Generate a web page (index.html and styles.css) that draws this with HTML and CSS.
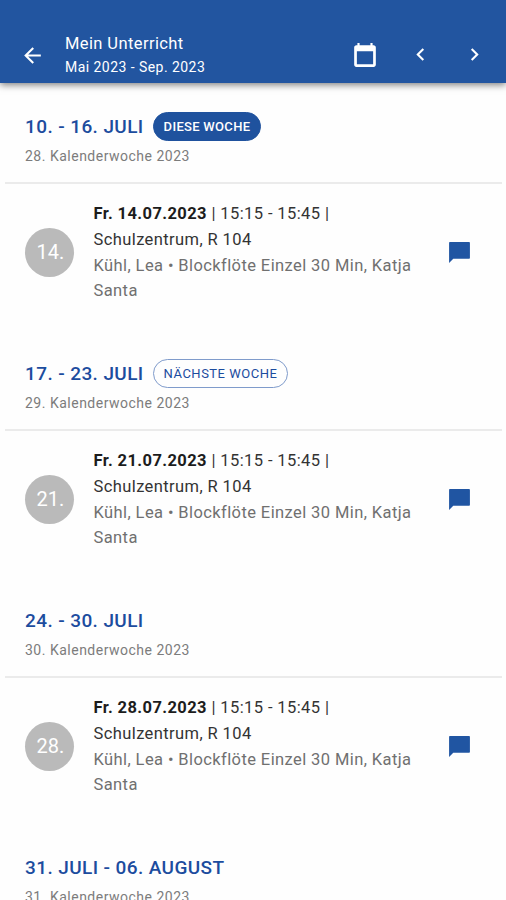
FILE: index.html
```html
<!DOCTYPE html>
<html lang="de">
<head>
<meta charset="utf-8">
<title>Mein Unterricht</title>
<link rel="stylesheet" href="styles.css">
</head>
<body>
  <header class="topbar">
    <svg class="back" viewBox="0 0 24 24"><path d="M20 11H7.83l5.59-5.59L12 4l-8 8 8 8 1.41-1.41L7.83 13H20v-2z"/></svg>
    <div class="titles">
      <div class="title"><span>Mein Unterricht</span></div>
      <div class="range"><span>Mai 2023 - Sep. 2023</span></div>
    </div>
    <svg class="calendar" viewBox="0 0 24 24"><path d="M20 3h-1V1h-2v2H7V1H5v2H4c-1.1 0-2 .9-2 2v16c0 1.100.9 2 2 2h16c1.100 0 2-.9 2-2V5c0-1.100-.9-2-2-2zm-.5 17.500H4.500V8.500h15v12z"/></svg>
    <svg class="arrow" viewBox="0 0 24 24"><path d="M15.410 7.410L14 6l-6 6 6 6 1.410-1.410L10.830 12z"/></svg>
    <svg class="arrow" viewBox="0 0 24 24"><path d="M10 6L8.590 7.410 13.170 12l-4.580 4.590L10 18l6-6z"/></svg>
  </header>

  <main class="weeks">
    <section class="week">
      <div class="week-head">
        <h2><span>10. - 16. JULI</span><span class="badge current">DIESE WOCHE</span></h2>
        <p><span>28. Kalenderwoche 2023</span></p>
      </div>
      <div class="lesson">
        <div class="day">14.</div>
        <div class="info">
          <div class="when"><b>Fr. 14.07.2023</b> | 15:15 - 15:45 |<br>Schulzentrum, R 104</div>
          <div class="who">Kühl, Lea • Blockflöte Einzel 30 Min, Katja<br>Santa</div>
        </div>
        <svg class="chat" viewBox="0 0 24 24"><path d="M3 2h18c.6 0 1 .4 1 1v14c0 .6-.4 1-1 1H6l-4 4V3c0-.6.4-1 1-1z"/></svg>
      </div>
    </section>

    <section class="week">
      <div class="week-head">
        <h2><span>17. - 23. JULI</span><span class="badge">NÄCHSTE WOCHE</span></h2>
        <p><span>29. Kalenderwoche 2023</span></p>
      </div>
      <div class="lesson">
        <div class="day">21.</div>
        <div class="info">
          <div class="when"><b>Fr. 21.07.2023</b> | 15:15 - 15:45 |<br>Schulzentrum, R 104</div>
          <div class="who">Kühl, Lea • Blockflöte Einzel 30 Min, Katja<br>Santa</div>
        </div>
        <svg class="chat" viewBox="0 0 24 24"><path d="M3 2h18c.6 0 1 .4 1 1v14c0 .6-.4 1-1 1H6l-4 4V3c0-.6.4-1 1-1z"/></svg>
      </div>
    </section>

    <section class="week">
      <div class="week-head">
        <h2><span>24. - 30. JULI</span></h2>
        <p><span>30. Kalenderwoche 2023</span></p>
      </div>
      <div class="lesson">
        <div class="day">28.</div>
        <div class="info">
          <div class="when"><b>Fr. 28.07.2023</b> | 15:15 - 15:45 |<br>Schulzentrum, R 104</div>
          <div class="who">Kühl, Lea • Blockflöte Einzel 30 Min, Katja<br>Santa</div>
        </div>
        <svg class="chat" viewBox="0 0 24 24"><path d="M3 2h18c.6 0 1 .4 1 1v14c0 .6-.4 1-1 1H6l-4 4V3c0-.6.4-1 1-1z"/></svg>
      </div>
    </section>

    <section class="week">
      <div class="week-head">
        <h2><span>31. JULI - 06. AUGUST</span></h2>
        <p><span>31. Kalenderwoche 2023</span></p>
      </div>
    </section>
  </main>
</body>
</html>
```
FILE: styles.css
```css
* {
  box-sizing: border-box;
}
body {
  margin: 0;
  height: 900px;
  overflow: hidden;
  display: flex;
  flex-direction: column;
  font-family: Roboto, "Liberation Sans", sans-serif;
  background-color: #fefefe;
}
.topbar {
  flex: none;
  display: flex;
  align-items: center;
  height: 83px;
  padding: 27px 19px 0 20px;
  color: white;
  background-color: #2255a0;
  box-shadow: 0 2px 7px rgba(0, 0, 0, 0.5);
}
.topbar svg {
  flex: none;
  fill: white;
}
.back {
  width: 25px;
  height: 25px;
}
.titles {
  flex: 1;
  margin-left: 20px;
  padding-top: 1px;
}
.title {
  font-size: 16.5px;
  line-height: 24px;
  letter-spacing: 0.4px;
}
.range {
  font-size: 14px;
  line-height: 23px;
  letter-spacing: 0.45px;
}
.calendar {
  width: 26px;
  height: 26px;
  margin-right: 30px;
  margin-bottom: 1px;
}
.arrow {
  width: 25px;
  height: 25px;
  margin-bottom: 1px;
}
.arrow + .arrow {
  margin-left: 29px;
}
.weeks {
  padding: 14px 4px 0 5px;
}
.week {
  height: 247px;
}
.week-head {
  height: 87px;
  padding: 14px 20px 0;
  border-bottom: 2px solid #ebebeb;
}
.week-head h2 {
  display: flex;
  align-items: center;
  height: 30px;
  margin: 0;
  font-size: 19px;
  font-weight: 500;
  letter-spacing: 0.4px;
  color: #1c4c9e;
}
.badge {
  height: 29px;
  margin-left: 9px;
  padding: 0 10px;
  border: 1px solid #7f9bcb;
  border-radius: 15px;
  font-size: 13px;
  font-weight: 400;
  line-height: 27px;
  letter-spacing: 0.5px;
}
.badge.current {
  font-weight: 500;
  letter-spacing: 0.3px;
  color: white;
  background-color: #1f529e;
  border-color: #1f529e;
}
.week-head p {
  margin: 5px 0 0;
  font-size: 14px;
  line-height: 20px;
  letter-spacing: 0.5px;
  color: #7c7c7c;
}
.lesson {
  display: flex;
  align-items: center;
  padding: 17px 30px 0 20px;
}
.day {
  width: 49px;
  height: 49px;
  padding-left: 2px;
  border-radius: 50%;
  font-size: 20px;
  line-height: 49px;
  text-align: center;
  color: white;
  background-color: #bababa;
}
.info {
  flex: 1;
  margin-left: 19.5px;
  font-size: 16.5px;
  line-height: 25.8px;
  letter-spacing: 0.4px;
  white-space: nowrap;
}
.when {
  color: #333;
}
.when b {
  font-weight: 700;
  color: #1c1c1c;
}
.who {
  color: #707070;
}
.chat {
  width: 25px;
  height: 25px;
  fill: #2055a2;
}
```
